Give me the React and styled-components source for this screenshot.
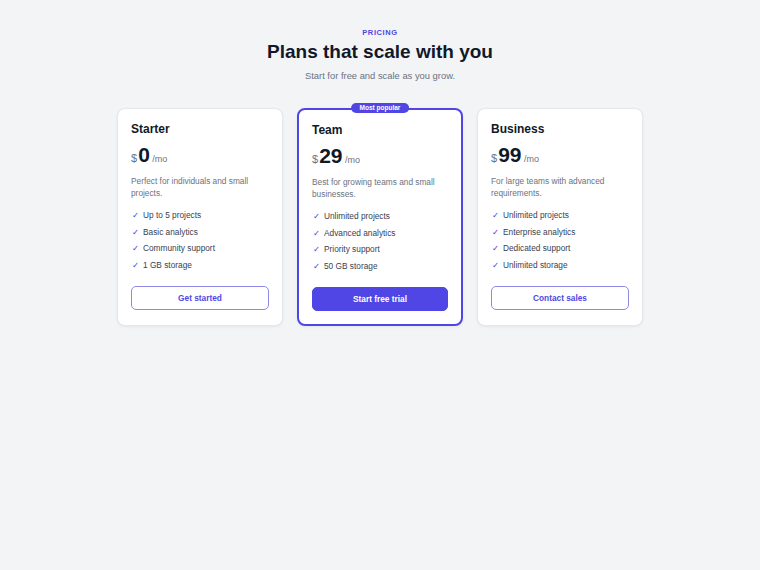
import React from 'react'
import styled, { createGlobalStyle } from 'styled-components'

const plans = [
	{
		name: 'Starter',
		price: '0',
		desc: 'Perfect for individuals and small projects.',
		features: ['Up to 5 projects', 'Basic analytics', 'Community support', '1 GB storage'],
		cta: 'Get started',
	},
	{
		name: 'Team',
		price: '29',
		desc: 'Best for growing teams and small businesses.',
		features: ['Unlimited projects', 'Advanced analytics', 'Priority support', '50 GB storage'],
		cta: 'Start free trial',
		popular: true,
	},
	{
		name: 'Business',
		price: '99',
		desc: 'For large teams with advanced requirements.',
		features: ['Unlimited projects', 'Enterprise analytics', 'Dedicated support', 'Unlimited storage'],
		cta: 'Contact sales',
	},
]

const App = () => {
	return (
		<Page>
			<GlobalStyle />
			<Header>
				<Eyebrow>PRICING</Eyebrow>
				<Title>Plans that scale with you</Title>
				<Subtitle>Start for free and scale as you grow.</Subtitle>
			</Header>
			<Grid>
				{plans.map((plan) => (
					<Card key={plan.name} $popular={plan.popular}>
						{plan.popular && <Badge>Most popular</Badge>}
						<PlanName>{plan.name}</PlanName>
						<PriceRow>
							<Currency>$</Currency>
							<Amount>{plan.price}</Amount>
							<Period>/mo</Period>
						</PriceRow>
						<Desc>{plan.desc}</Desc>
						<Features>
							{plan.features.map((f) => (
								<li key={f}>
									<Check>✓</Check>
									{f}
								</li>
							))}
						</Features>
						<Button $primary={plan.popular}>{plan.cta}</Button>
					</Card>
				))}
			</Grid>
		</Page>
	)
}

const GlobalStyle = createGlobalStyle`
	* { box-sizing: border-box; }
	html, body {
		margin: 0;
		background: #f3f4f6;
		font-family: "Liberation Sans", Arial, sans-serif;
	}
`

const Page = styled.div`
	min-height: 570px;
	padding-top: 28px;
	background: #f3f4f6;
`

const Header = styled.header`
	display: flex;
	flex-direction: column;
	align-items: center;
`

const Eyebrow = styled.div`
	font-size: 7.5px;
	line-height: 10px;
	font-weight: 700;
	letter-spacing: 0.08em;
	color: #4f46e5;
`

const Title = styled.h1`
	margin: 2px 0 0;
	font-size: 19px;
	line-height: 24px;
	font-weight: 700;
	color: #111827;
`

const Subtitle = styled.p`
	margin: 4.5px 0 0;
	font-size: 9.4px;
	line-height: 13px;
	color: #6b7280;
`

const Grid = styled.div`
	margin-top: 26.5px;
	display: grid;
	grid-template-columns: repeat(3, 166px);
	gap: 14px;
	justify-content: center;
	align-items: stretch;
`

const Card = styled.div`
	position: relative;
	display: flex;
	flex-direction: column;
	background: #fff;
	border: ${(p) => (p.$popular ? '2px solid #4f46e5' : '1px solid #e5e7eb')};
	border-radius: 8px;
	padding: ${(p) => (p.$popular ? '13px 13px 13px' : '13px 13px 14px')};
	box-shadow: 0 1px 3px rgba(17, 24, 39, 0.06);
`

const Badge = styled.span`
	position: absolute;
	top: -7px;
	left: 50%;
	transform: translateX(-50%);
	height: 10px;
	padding: 0 8.5px;
	border-radius: 999px;
	background: #4f46e5;
	color: #fff;
	font-size: 6.5px;
	font-weight: 700;
	line-height: 10px;
	white-space: nowrap;
`

const PlanName = styled.h3`
	margin: 0;
	font-size: 12px;
	line-height: 14px;
	font-weight: 700;
	color: #111827;
`

const PriceRow = styled.div`
	margin-top: 8px;
	display: flex;
	align-items: baseline;
	line-height: 21px;
`

const Currency = styled.span`
	font-size: 11px;
	color: #6b7280;
	margin-right: 1px;
`

const Amount = styled.span`
	font-size: 21px;
	font-weight: 700;
	color: #111827;
`

const Period = styled.span`
	font-size: 9px;
	color: #6b7280;
	margin-left: 2.5px;
`

const Desc = styled.p`
	margin: 6px 0 0;
	font-size: 8.3px;
	line-height: 11.5px;
	color: #6b7280;
`

const Features = styled.ul`
	list-style: none;
	margin: 11px 0 0;
	padding: 0;
	display: flex;
	flex-direction: column;
	gap: 5.2px;
	li {
		display: flex;
		align-items: center;
		font-size: 8.3px;
		line-height: 11.5px;
		color: #374151;
	}
`

const Check = styled.span`
	width: 12px;
	padding-left: 1px;
	font-family: "DejaVu Sans", sans-serif;
	font-size: 8.5px;
	font-weight: 700;
	color: #4f46e5;
`

const Button = styled.button`
	margin-top: 14px;
	height: 24px;
	width: 100%;
	border-radius: 5px;
	font-family: inherit;
	font-size: 8.3px;
	font-weight: 700;
	cursor: pointer;
	border: 1px solid ${(p) => (p.$primary ? '#4f46e5' : '#8f8ae6')};
	background: ${(p) => (p.$primary ? '#4f46e5' : '#fff')};
	color: ${(p) => (p.$primary ? '#fff' : '#4f46e5')};
`

export default App
